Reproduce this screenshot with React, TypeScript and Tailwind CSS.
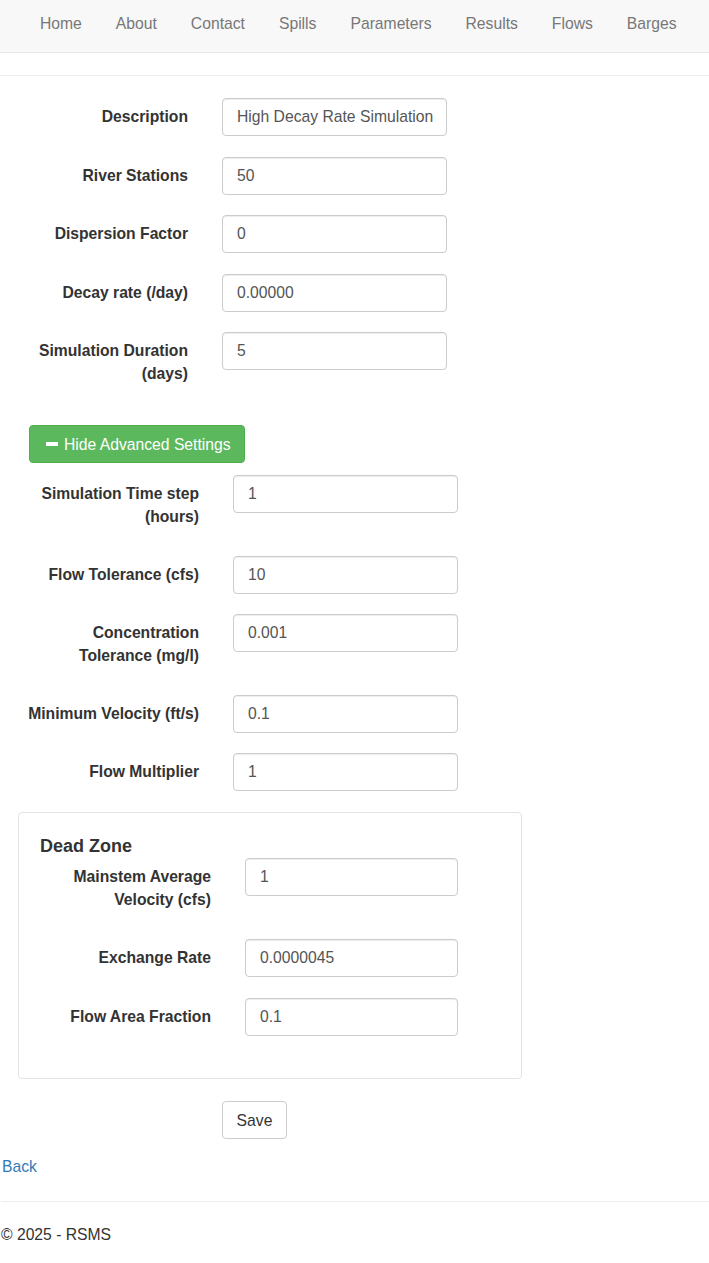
import React from "react";

const navItems = ["Home", "About", "Contact", "Spills", "Parameters", "Results", "Flows", "Barges"];

type Field = { label: string[]; value: string };

const mainFields: Field[] = [
    { label: ["Description"], value: "High Decay Rate Simulation" },
    { label: ["River Stations"], value: "50" },
    { label: ["Dispersion Factor"], value: "0" },
    { label: ["Decay rate (/day)"], value: "0.00000" },
    { label: ["Simulation Duration", "(days)"], value: "5" },
];

const advancedFields: Field[] = [
    { label: ["Simulation Time step", "(hours)"], value: "1" },
    { label: ["Flow Tolerance (cfs)"], value: "10" },
    { label: ["Concentration", "Tolerance (mg/l)"], value: "0.001" },
    { label: ["Minimum Velocity (ft/s)"], value: "0.1" },
    { label: ["Flow Multiplier"], value: "1" },
];

const deadZoneFields: Field[] = [
    { label: ["Mainstem Average", "Velocity (cfs)"], value: "1" },
    { label: ["Exchange Rate"], value: "0.0000045" },
    { label: ["Flow Area Fraction"], value: "0.1" },
];

function FormRow({ field, labelWidth, inputWidth, rowGap }: { field: Field; labelWidth: string; inputWidth: string; rowGap: string }) {
    return (
        <div className={`flex items-start ${rowGap}`}>
            <label className={`${labelWidth} shrink-0 pt-[7px] pb-[8px] text-right font-bold text-[#333] leading-[23px]`}>
                {field.label.map((line) => (
                    <div key={line} className="whitespace-nowrap">{line}</div>
                ))}
            </label>
            <input
                defaultValue={field.value}
                className={`ml-[34px] ${inputWidth} h-[38px] rounded-[4px] border border-[#ccc] bg-white pl-[14px] pr-[12px] text-[15.7px] text-[#555] shadow-[inset_0_1px_1px_rgba(0,0,0,0.075)] outline-none`}
            />
        </div>
    );
}

export default function App() {
    return (
        <div className="min-h-screen w-full bg-white text-[15.7px] leading-[23px] text-[#333] font-['Liberation_Sans',Arial,sans-serif]">
            {/* navbar */}
            <nav className="h-[53px] border-b border-[#e7e7e7] bg-[#f8f8f8]">
                <ul className="flex pl-[23px]">
                    {navItems.map((item) => (
                        <li key={item} className="px-[17px] pt-[12px] text-[#777]">
                            {item}
                        </li>
                    ))}
                </ul>
            </nav>

            <hr className="mt-[22px] border-t border-[#eee]" />

            <div className="mt-[22px]">
                {mainFields.map((f) => (
                    <FormRow key={f.label[0]} field={f} labelWidth="w-[188px]" inputWidth="w-[225px]" rowGap="mb-[20.5px]" />
                ))}
            </div>

            <button className="ml-[29px] mt-[32px] flex h-[38px] w-[216px] items-center rounded-[4px] border border-[#4cae4c] bg-[#5cb85c] pl-[16px] text-white">
                <span className="mr-[6px] inline-block h-[3.5px] w-[12px] bg-white" />
                Hide Advanced Settings
            </button>

            <div className="mt-[12px]">
                {advancedFields.map((f) => (
                    <FormRow key={f.label[0]} field={f} labelWidth="w-[199px]" inputWidth="w-[225px]" rowGap="mb-[20px]" />
                ))}
            </div>

            {/* dead zone */}
            <div className="ml-[18px] mt-[21px] w-[504px] rounded-[4px] border border-[#e3e3e3] pt-[23px] pb-[22px]">
                <h4 className="pl-[21px] text-[18px] font-bold leading-[20px] text-[#333]">Dead Zone</h4>
                <div className="mt-[2px]">
                    <FormRow field={deadZoneFields[0]} labelWidth="w-[192px]" inputWidth="w-[213px]" rowGap="mb-[20px]" />
                    <FormRow field={deadZoneFields[1]} labelWidth="w-[192px]" inputWidth="w-[213px]" rowGap="mb-[21px]" />
                    <FormRow field={deadZoneFields[2]} labelWidth="w-[192px]" inputWidth="w-[213px]" rowGap="mb-[20px]" />
                </div>
            </div>

            <button className="ml-[222px] mt-[22px] h-[38px] w-[65px] rounded-[4px] border border-[#ccc] bg-white text-[#333]">
                Save
            </button>

            <div className="mt-[15.5px] pl-[2px]">
                <a className="text-[#337ab7]">Back</a>
            </div>

            <hr className="mt-[23.5px] ml-[1px] border-t border-[#eee]" />
            <footer className="mt-[21px] pl-[1px]">© 2025 - RSMS</footer>
        </div>
    );
}
